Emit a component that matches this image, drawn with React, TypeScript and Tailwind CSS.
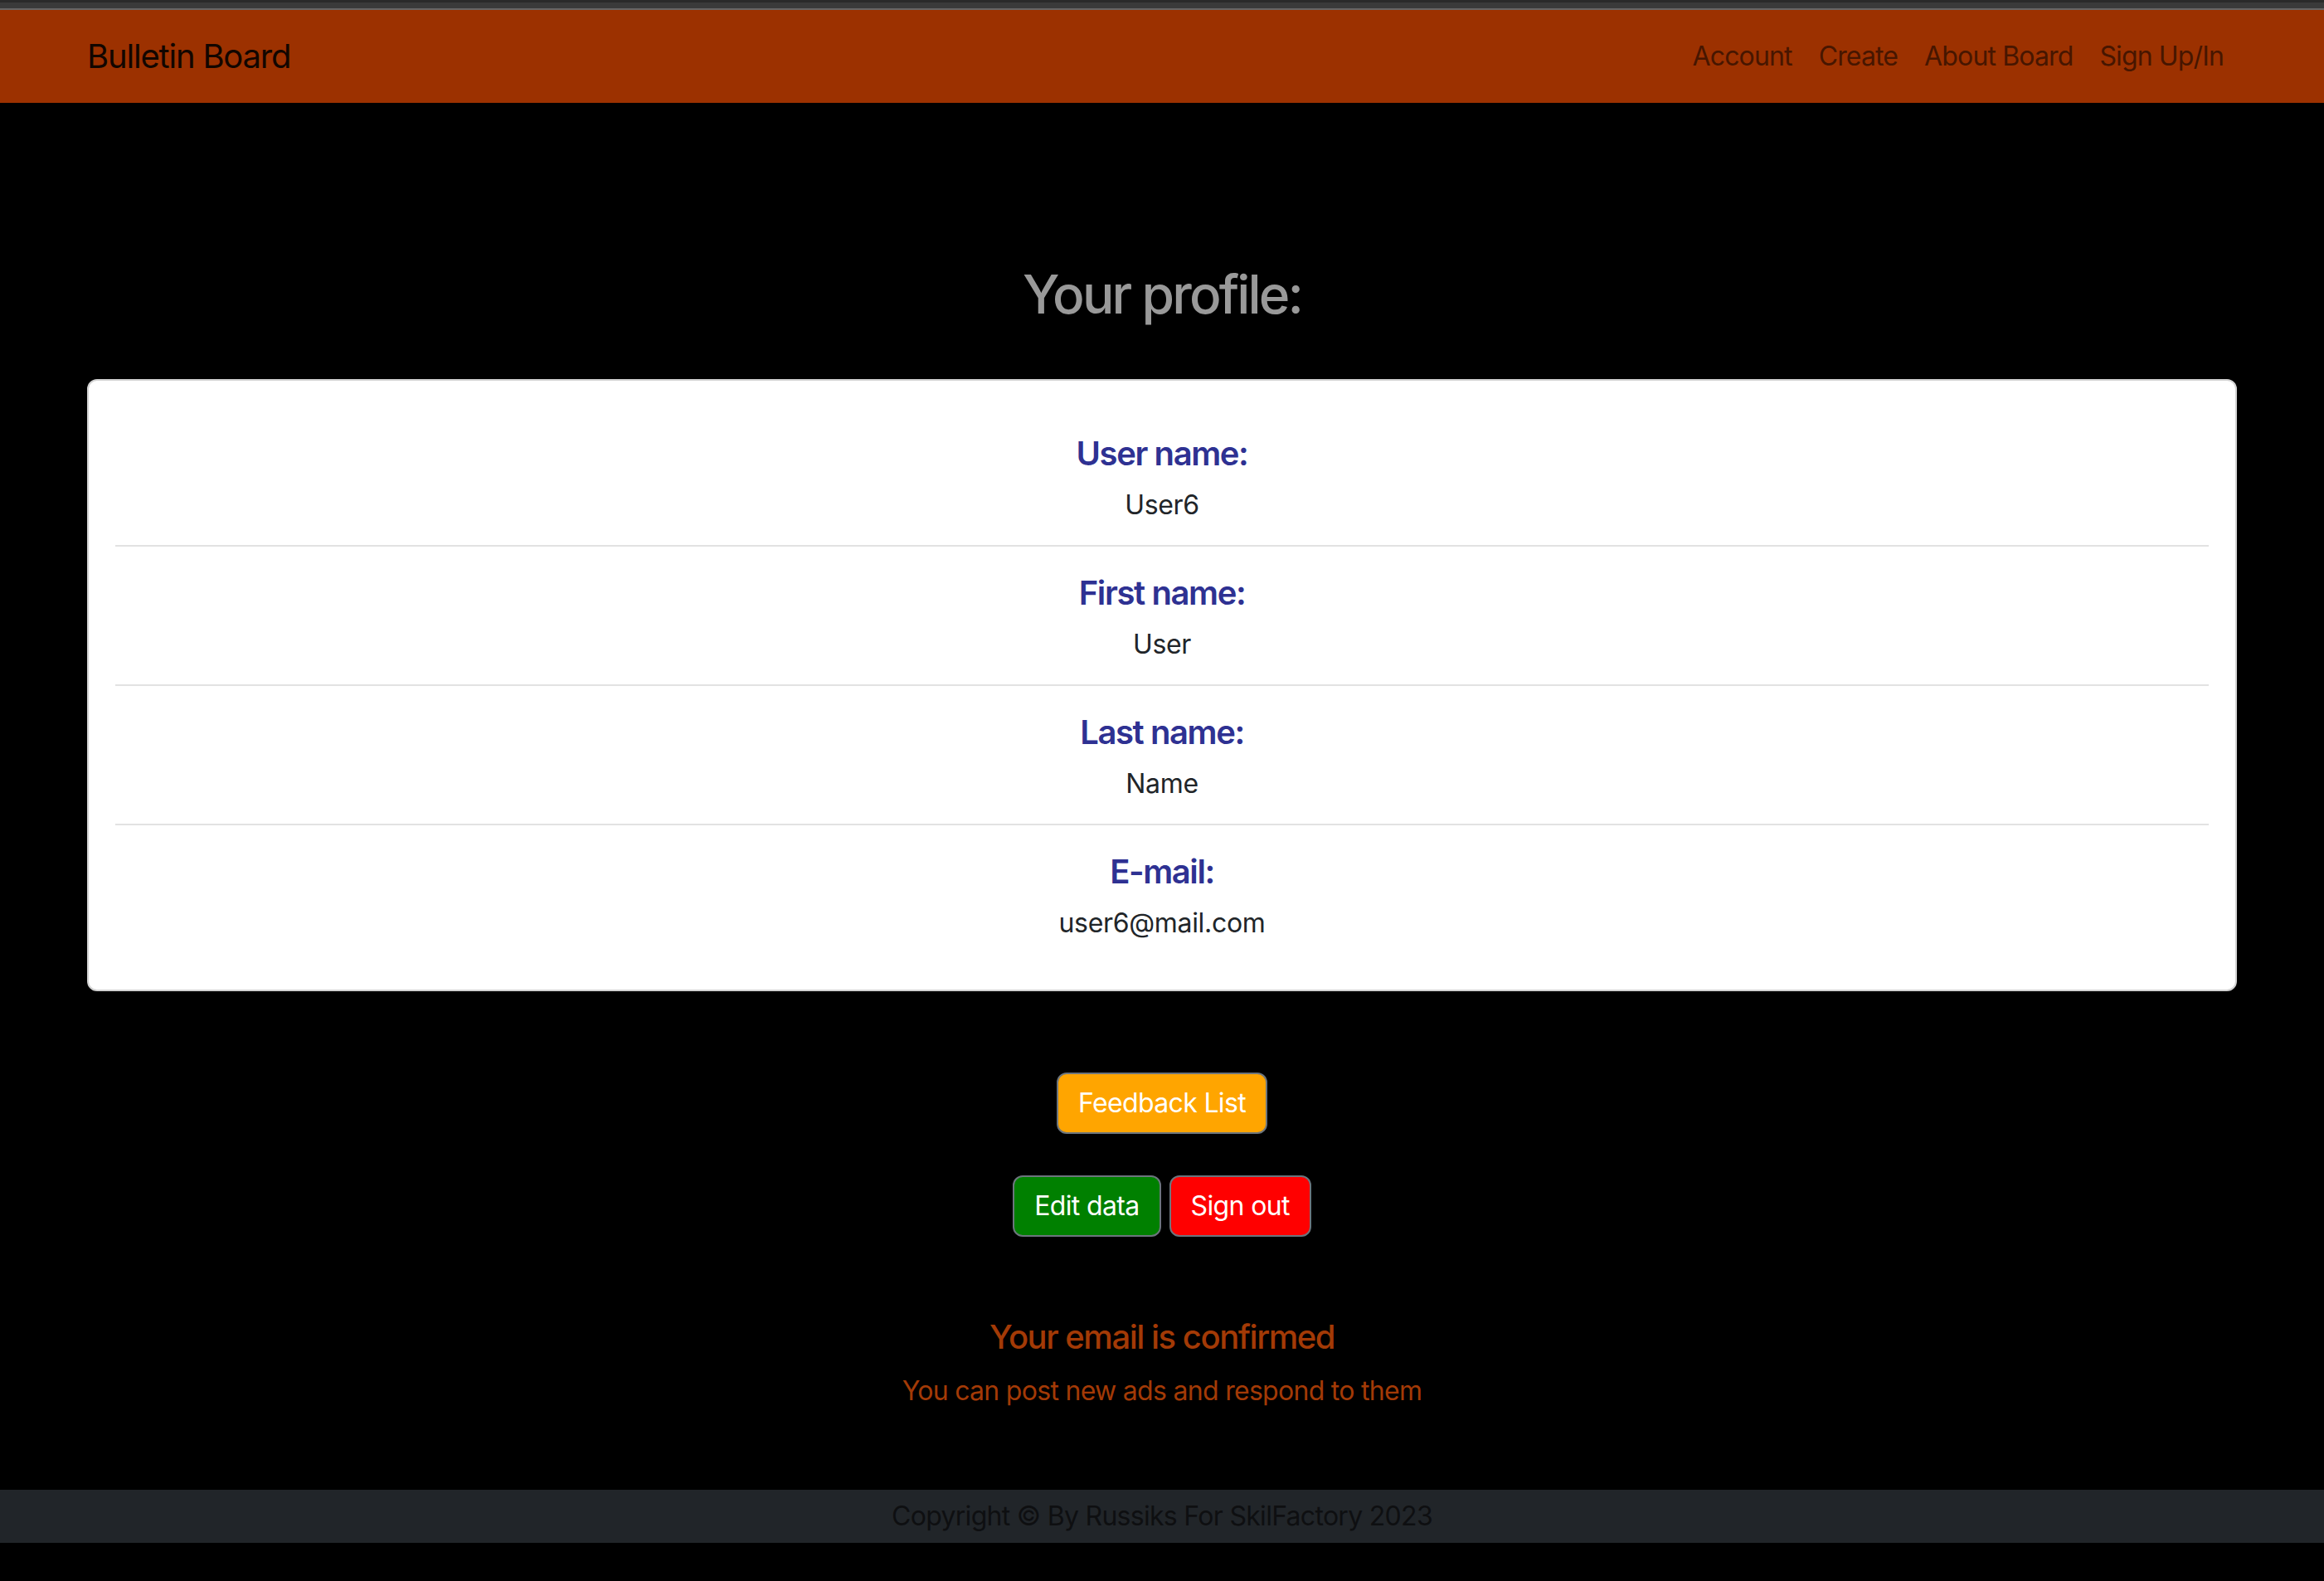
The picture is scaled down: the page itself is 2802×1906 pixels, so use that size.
type Field = {
  label: string;
  value: string;
};

const fields: Field[] = [
  { label: "User name:", value: "User6" },
  { label: "First name:", value: "User" },
  { label: "Last name:", value: "Name" },
  { label: "E-mail:", value: "user6@mail.com" },
];

const links = ["Account", "Create", "About Board", "Sign Up/In"];

export default function App() {
  return (
    <div className="min-h-screen bg-black font-['Inter','Noto_Sans',sans-serif]">
      {/* browser strip */}
      <div className="h-[12px] bg-[#3a3a3a] border-t-[3px] border-t-[#2a2a2a] border-b-2 border-b-[#666666]"></div>

      <nav className="h-[112px] bg-[#9c3100]">
        <div className="mx-auto w-[2640px] px-[24px] h-full flex items-center justify-between">
          <a className="text-[40px] leading-[60px] tracking-[-0.03em] text-[#120600]">Bulletin Board</a>
          <ul className="flex">
            {links.map((l) => (
              <li key={l} className="px-[16px] text-[32px] leading-[48px] tracking-[-0.027em] text-[#471600]">
                {l}
              </li>
            ))}
          </ul>
        </div>
      </nav>

      <main className="mx-auto w-[2640px] px-[24px] flex flex-col items-center">
        <h2 className="mt-[192px] text-[64px] leading-[77px] font-medium tracking-[-0.045em] text-[#999999]">
          Your profile:
        </h2>

        <div className="mt-[64px] w-full bg-white border-2 border-[#d2d2d2] rounded-[12px] px-[32px] py-[32px]">
          <ul>
            {fields.map((f) => (
              <li
                key={f.label}
                className="pt-[32px] pb-[24px] text-center border-b-2 border-[#e2e2e2] last:border-b-0"
              >
                <h5 className="text-[40px] leading-[48px] font-semibold tracking-[-0.035em] text-[#2e3192] mb-[14px]">
                  {f.label}
                </h5>
                <p className="text-[32px] leading-[48px] tracking-[-0.01em] text-[#212529]">{f.value}</p>
              </li>
            ))}
          </ul>
        </div>

        <button className="mt-[98px] bg-[#ffa500] text-white border-2 border-[#6c757d] rounded-[12px] px-[24px] py-[11px] text-[32px] leading-[48px] tracking-[-0.02em]">
          Feedback List
        </button>

        <div className="mt-[50px] flex gap-[10px]">
          <button className="bg-[#008000] text-white border-2 border-[#6c757d] rounded-[12px] px-[24px] py-[11px] text-[32px] leading-[48px] tracking-[-0.02em]">
            Edit data
          </button>
          <button className="bg-[#ff0000] text-white border-2 border-[#6c757d] rounded-[12px] px-[24px] py-[11px] text-[32px] leading-[48px] tracking-[-0.02em]">
            Sign out
          </button>
        </div>

        <h5 className="mt-[97px] text-[40px] leading-[48px] font-medium tracking-[-0.037em] text-[#a33a06]">
          Your email is confirmed
        </h5>
        <p className="mt-[17px] text-[32px] leading-[48px] tracking-[-0.022em] text-[#a33a06]">
          You can post new ads and respond to them
        </p>
      </main>

      <footer className="mt-[95px] h-[64px] bg-[#212529] text-center text-[32px] leading-[64px] tracking-[-0.022em] text-[#0e0f11]">
        Copyright © By Russiks For SkilFactory 2023
      </footer>
    </div>
  );
}
